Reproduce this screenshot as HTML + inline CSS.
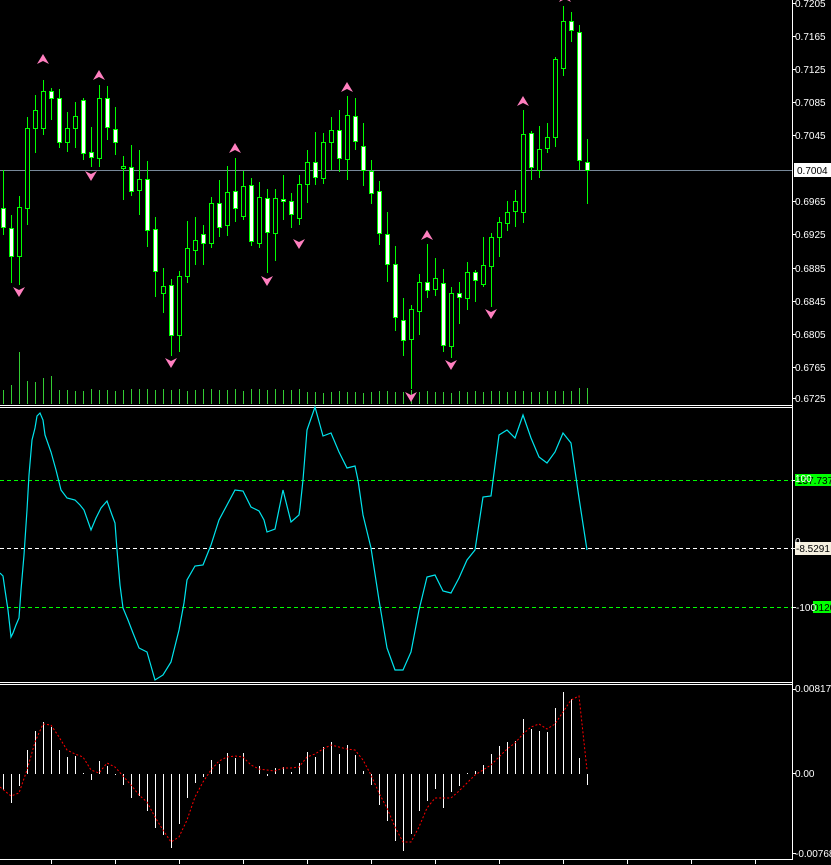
<!DOCTYPE html>
<html><head><meta charset="utf-8"><style>
html,body{margin:0;padding:0;background:#000;width:831px;height:865px;overflow:hidden}
svg{display:block}
text{font-family:"Liberation Sans",sans-serif;font-size:10px;fill:#fff}
</style></head><body>
<svg width="831" height="865" viewBox="0 0 831 865" shape-rendering="crispEdges">
<rect width="831" height="865" fill="#000"/>
<!-- panel separators -->
<g stroke="#fff" stroke-width="1">
<line x1="0" y1="405.5" x2="792" y2="405.5"/><line x1="0" y1="407.5" x2="792" y2="407.5"/>
<line x1="0" y1="682.5" x2="792" y2="682.5"/><line x1="0" y1="684.5" x2="792" y2="684.5"/>
<line x1="0" y1="859.5" x2="792" y2="859.5"/>
<line x1="792.5" y1="0" x2="792.5" y2="860"/>
<line x1="51.5" y1="860" x2="51.5" y2="864"/><line x1="115.5" y1="860" x2="115.5" y2="864"/><line x1="179.5" y1="860" x2="179.5" y2="864"/><line x1="243.5" y1="860" x2="243.5" y2="864"/><line x1="307.5" y1="860" x2="307.5" y2="864"/><line x1="371.5" y1="860" x2="371.5" y2="864"/><line x1="435.5" y1="860" x2="435.5" y2="864"/><line x1="499.5" y1="860" x2="499.5" y2="864"/><line x1="563.5" y1="860" x2="563.5" y2="864"/><line x1="627.5" y1="860" x2="627.5" y2="864"/><line x1="691.5" y1="860" x2="691.5" y2="864"/><line x1="755.5" y1="860" x2="755.5" y2="864"/>
</g>
<!-- price line -->
<line x1="0" y1="170.5" x2="792" y2="170.5" stroke="#778899"/>
<!-- volumes -->
<g stroke="#3c3" stroke-width="1">
<path d="M3.5 404V390M11.5 404V385M19.5 404V352M27.5 404V381M35.5 404V382M43.5 404V378M51.5 404V376M59.5 404V390M67.5 404V390M75.5 404V391M83.5 404V391M91.5 404V389M99.5 404V390M107.5 404V390M115.5 404V391M123.5 404V390M131.5 404V389M139.5 404V389M147.5 404V389M155.5 404V390M163.5 404V389M171.5 404V390M179.5 404V389M187.5 404V391M195.5 404V390M203.5 404V389M211.5 404V389M219.5 404V390M227.5 404V390M235.5 404V389M243.5 404V391M251.5 404V389M259.5 404V389M267.5 404V390M275.5 404V389M283.5 404V390M291.5 404V390M299.5 404V389M307.5 404V392M315.5 404V392M323.5 404V393M331.5 404V392M339.5 404V391M347.5 404V392M355.5 404V392M363.5 404V393M371.5 404V392M379.5 404V391M387.5 404V391M395.5 404V392M403.5 404V392M411.5 404V390M419.5 404V392M427.5 404V391M435.5 404V392M443.5 404V392M451.5 404V393M459.5 404V391M467.5 404V392M475.5 404V391M483.5 404V392M491.5 404V391M499.5 404V391M507.5 404V392M515.5 404V391M523.5 404V391M531.5 404V392M539.5 404V392M547.5 404V391M555.5 404V391M563.5 404V391M571.5 404V391M579.5 404V388M587.5 404V388"/>
</g>
<!-- wicks -->
<g stroke="#0f0" stroke-width="1">
<path d="M3.5 170V235M11.5 215V283M19.5 196V285M27.5 117V225M35.5 95V153M43.5 80V135M51.5 88V120M59.5 89V148M67.5 112V152M75.5 102V148M83.5 98V160M91.5 127V167M99.5 85V167M107.5 86V140M115.5 107V155M123.5 156V200M131.5 145V196M139.5 150V215M147.5 161V247M155.5 217V297M163.5 268V313M171.5 279V356M179.5 271V352M187.5 221V283M195.5 217V265M203.5 225V265M211.5 197V248M219.5 180V237M227.5 166V236M235.5 158V222M243.5 171V220M251.5 178V246M259.5 182V248M267.5 189V273M275.5 189V261M283.5 175V220M291.5 193V228M299.5 175V225M307.5 150V203M315.5 132V185M323.5 133V184M331.5 117V170M339.5 110V172M347.5 96V180M355.5 98V150M363.5 123V186M371.5 160V204M379.5 181V245M387.5 212V282M395.5 246V331M403.5 298V356M411.5 305V389M419.5 274V335M427.5 244V298M435.5 258V296M443.5 269V352M451.5 287V358M459.5 282V324M467.5 262V310M475.5 270V302M483.5 237V287M491.5 233V307M499.5 217V257M507.5 201V231M515.5 190V227M523.5 110V223M531.5 131V180M539.5 126V178M547.5 123V153M555.5 57V147M563.5 6V76M571.5 12V42M579.5 25V170M587.5 139V204"/>
</g>
<!-- bodies -->
<g stroke="#0f0" stroke-width="1">
<g fill="#fff">
<rect x="1.5" y="208.5" width="4" height="19"/><rect x="9.5" y="228.5" width="4" height="28"/>
<rect x="49.5" y="91.5" width="4" height="7"/><rect x="57.5" y="98.5" width="4" height="44"/>
<rect x="81.5" y="100.5" width="4" height="53"/><rect x="89.5" y="152.5" width="4" height="5"/>
<rect x="105.5" y="98.5" width="4" height="29"/><rect x="113.5" y="129.5" width="4" height="13"/>
<rect x="129.5" y="167.5" width="4" height="24"/><rect x="145.5" y="179.5" width="4" height="51"/>
<rect x="153.5" y="229.5" width="4" height="42"/><rect x="169.5" y="285.5" width="4" height="50"/>
<rect x="201.5" y="234.5" width="4" height="9"/><rect x="217.5" y="203.5" width="4" height="24"/>
<rect x="233.5" y="191.5" width="4" height="17"/><rect x="249.5" y="185.5" width="4" height="56"/>
<rect x="265.5" y="198.5" width="4" height="34"/><rect x="281.5" y="199.5" width="4" height="2"/>
<rect x="289.5" y="201.5" width="4" height="13"/><rect x="313.5" y="162.5" width="4" height="15"/>
<rect x="337.5" y="130.5" width="4" height="28"/><rect x="353.5" y="116.5" width="4" height="25"/>
<rect x="361.5" y="146.5" width="4" height="24"/><rect x="369.5" y="171.5" width="4" height="22"/>
<rect x="377.5" y="191.5" width="4" height="42"/><rect x="385.5" y="234.5" width="4" height="30"/>
<rect x="393.5" y="264.5" width="4" height="53"/><rect x="401.5" y="320.5" width="4" height="20"/>
<rect x="425.5" y="282.5" width="4" height="8"/><rect x="441.5" y="283.5" width="4" height="62"/>
<rect x="457.5" y="293.5" width="4" height="4"/><rect x="473.5" y="272.5" width="4" height="8"/>
<rect x="529.5" y="133.5" width="4" height="34"/><rect x="569.5" y="21.5" width="4" height="9"/>
<rect x="577.5" y="32.5" width="4" height="128"/><rect x="585.5" y="162.5" width="4" height="8"/>
</g>
<g fill="#000">
<rect x="17.5" y="207.5" width="4" height="49"/><rect x="25.5" y="128.5" width="4" height="80"/>
<rect x="33.5" y="110.5" width="4" height="18"/><rect x="41.5" y="91.5" width="4" height="37"/>
<rect x="65.5" y="128.5" width="4" height="14"/><rect x="73.5" y="116.5" width="4" height="12"/>
<rect x="97.5" y="98.5" width="4" height="60"/><rect x="121.5" y="166.5" width="4" height="2"/>
<rect x="137.5" y="179.5" width="4" height="11"/><rect x="161.5" y="286.5" width="4" height="7"/>
<rect x="177.5" y="276.5" width="4" height="59"/><rect x="185.5" y="248.5" width="4" height="28"/>
<rect x="193.5" y="240.5" width="4" height="10"/><rect x="209.5" y="203.5" width="4" height="40"/>
<rect x="225.5" y="192.5" width="4" height="33"/><rect x="241.5" y="186.5" width="4" height="30"/>
<rect x="257.5" y="197.5" width="4" height="46"/><rect x="273.5" y="198.5" width="4" height="35"/>
<rect x="297.5" y="184.5" width="4" height="34"/><rect x="305.5" y="162.5" width="4" height="22"/>
<rect x="321.5" y="142.5" width="4" height="36"/><rect x="329.5" y="130.5" width="4" height="12"/>
<rect x="345.5" y="115.5" width="4" height="44"/><rect x="409.5" y="309.5" width="4" height="30"/>
<rect x="417.5" y="282.5" width="4" height="29"/><rect x="433.5" y="278.5" width="4" height="11"/>
<rect x="449.5" y="293.5" width="4" height="53"/><rect x="465.5" y="272.5" width="4" height="26"/>
<rect x="481.5" y="265.5" width="4" height="19"/><rect x="489.5" y="237.5" width="4" height="29"/>
<rect x="497.5" y="222.5" width="4" height="15"/><rect x="505.5" y="212.5" width="4" height="11"/>
<rect x="513.5" y="201.5" width="4" height="10"/><rect x="521.5" y="134.5" width="4" height="78"/>
<rect x="537.5" y="149.5" width="4" height="21"/><rect x="545.5" y="137.5" width="4" height="11"/>
<rect x="553.5" y="59.5" width="4" height="78"/><rect x="561.5" y="21.5" width="4" height="47"/>
</g>
</g>
<!-- fractal arrows -->
<g fill="#ff7fbf" shape-rendering="auto">
<path id="u" d="M-6 5L0 -5L6 5L0 2Z" transform="translate(43,59)"/>
<path d="M-6 5L0 -5L6 5L0 2Z" transform="translate(99,75)"/>
<path d="M-6 5L0 -5L6 5L0 2Z" transform="translate(235,148)"/>
<path d="M-6 5L0 -5L6 5L0 2Z" transform="translate(347,87)"/>
<path d="M-6 5L0 -5L6 5L0 2Z" transform="translate(427,235)"/>
<path d="M-6 5L0 -5L6 5L0 2Z" transform="translate(523,101)"/>
<path d="M-6 5L0 -5L6 5L0 2Z" transform="translate(565,-3)"/>
<path d="M-6 -5L0 5L6 -5L0 -2Z" transform="translate(19,292)"/>
<path d="M-6 -5L0 5L6 -5L0 -2Z" transform="translate(91,176)"/>
<path d="M-6 -5L0 5L6 -5L0 -2Z" transform="translate(171,363)"/>
<path d="M-6 -5L0 5L6 -5L0 -2Z" transform="translate(267,281)"/>
<path d="M-6 -5L0 5L6 -5L0 -2Z" transform="translate(299,244)"/>
<path d="M-6 -5L0 5L6 -5L0 -2Z" transform="translate(411,397)"/>
<path d="M-6 -5L0 5L6 -5L0 -2Z" transform="translate(451,365)"/>
<path d="M-6 -5L0 5L6 -5L0 -2Z" transform="translate(491,314)"/>
</g>
<!-- CCI levels -->
<g stroke-width="1" stroke-dasharray="4 3">
<line x1="0" y1="480.5" x2="792" y2="480.5" stroke="#0f0"/>
<line x1="0" y1="548.5" x2="792" y2="548.5" stroke="#fff"/>
<line x1="0" y1="607.5" x2="792" y2="607.5" stroke="#0f0"/>
</g>
<polyline fill="none" stroke="#00e5ee" stroke-width="1.2" shape-rendering="auto" points="0,573 3,576 5,590 8,610 11,637 13,633 16,625 19,618 21,590 24,555 27,510 29,475 32,440 35,428 37,416 40,413 43,420 45,435 51,452 56,470 61,490 67,498 75,500 80,505 84,510 91,530 96,518 101,508 107,501 112,515 115,523 117,550 120,585 123,608 128,620 133,633 139,648 147,652 155,680 163,675 171,662 179,630 184,603 187,580 195,566 203,565 211,545 219,520 227,505 235,490 243,491 251,507 259,511 264,520 267,532 275,529 283,490 291,522 299,515 300,508 303,480 307,430 315,407 323,436 331,433 339,452 347,468 355,466 358,480 363,515 371,548 379,600 387,648 395,670 403,670 411,652 419,610 427,577 435,575 443,591 451,593 459,578 467,560 475,550 483,497 491,496 499,435 507,430 515,438 523,415 531,438 539,457 547,463 555,452 563,433 571,443 579,498 587,550"/>
<!-- MACD histogram -->
<path stroke="#fff" stroke-width="1" d="M3.5 774V790M11.5 774V803M19.5 774V786M27.5 774V750M35.5 774V731M43.5 774V722M51.5 774V727M59.5 774V750M67.5 774V757M75.5 774V756M83.5 774V773M91.5 774V780M99.5 774V761M107.5 774V766M115.5 774V775M123.5 774V785M131.5 774V798M139.5 774V796M147.5 774V811M155.5 774V828M163.5 774V835M171.5 774V848M179.5 774V824M187.5 774V798M195.5 774V783M203.5 774V777M211.5 774V760M219.5 774V764M227.5 774V753M235.5 774V758M243.5 774V753M251.5 774V774M259.5 774V766M267.5 774V776M275.5 774V768M283.5 774V767M291.5 774V772M299.5 774V763M307.5 774V752M315.5 774V757M323.5 774V747M331.5 774V742M339.5 774V754M347.5 774V745M355.5 774V755M363.5 774V771M371.5 774V785M379.5 774V805M387.5 774V821M395.5 774V841M403.5 774V851M411.5 774V834M419.5 774V811M427.5 774V801M435.5 774V789M443.5 774V808M451.5 774V792M459.5 774V786M467.5 774V773M475.5 774V771M483.5 774V765M491.5 774V754M499.5 774V746M507.5 774V742M515.5 774V741M523.5 774V719M531.5 774V729M539.5 774V731M547.5 774V732M555.5 774V708M563.5 774V692M571.5 774V699M579.5 774V758M587.5 774V785"/>
<polyline fill="none" stroke="#f00" stroke-width="1" stroke-dasharray="2 2" shape-rendering="auto" points="0,787 11,796 19,793 27,770 35,742 43,724 51,725 59,737 67,750 75,754 83,757 91,770 99,773 107,763 115,767 123,776 131,785 139,795 147,802 155,817 163,830 171,842 179,837 187,820 195,797 203,782 211,770 219,761 227,757 235,756 243,757 251,765 259,769 267,770 275,771 283,768 291,768 299,767 307,757 315,754 323,749 331,745 339,747 347,749 355,750 363,760 371,775 379,793 387,808 395,827 403,842 411,842 419,827 427,808 435,798 443,798 451,798 459,791 467,783 475,775 483,770 491,765 499,757 507,749 515,743 523,734 531,727 539,724 547,729 555,724 563,712 571,700 579,696 587,770"/>
<!-- axis ticks -->
<path stroke="#fff" d="M792 3.5H796M792 36.5H796M792 69.5H796M792 102.5H796M792 135.5H796M792 201.5H796M792 234.5H796M792 268.5H796M792 301.5H796M792 334.5H796M792 367.5H796M792 398.5H796M792 480.5H796M792 548.5H796M792 607.5H796M792 689.5H796M792 773.5H796M792 853.5H796"/>
<!-- labels -->
<g>
<text x="795" y="7">0.7205</text><text x="795" y="40">0.7165</text><text x="795" y="73">0.7125</text>
<text x="795" y="106">0.7085</text><text x="795" y="139">0.7045</text>
<rect x="794" y="163" width="37" height="14" fill="#fff"/><text x="797" y="174" style="fill:#000">0.7004</text>
<text x="795" y="205">0.6965</text><text x="795" y="238">0.6925</text><text x="795" y="272">0.6885</text>
<text x="795" y="305">0.6845</text><text x="795" y="338">0.6805</text><text x="795" y="371">0.6765</text>
<text x="795" y="402">0.6725</text>
<rect x="795" y="474" width="36" height="12" fill="#0f0"/><text x="797" y="484" style="fill:#000">137.7370</text>
<text x="795" y="482">100</text>
<rect x="795" y="542" width="36" height="13" fill="#f5f0e0"/><text x="796" y="552" style="fill:#000">-8.5291</text>
<text x="795" y="545">0</text>
<rect x="813" y="601" width="18" height="12" fill="#0f0"/><text x="813" y="611" style="fill:#000">0120</text>
<text x="796" y="611">-100</text>
<text x="795" y="692">0.00817</text><text x="795" y="777">0.00</text><text x="795" y="857">-0.00768</text>
</g>
</svg>
</body></html>
